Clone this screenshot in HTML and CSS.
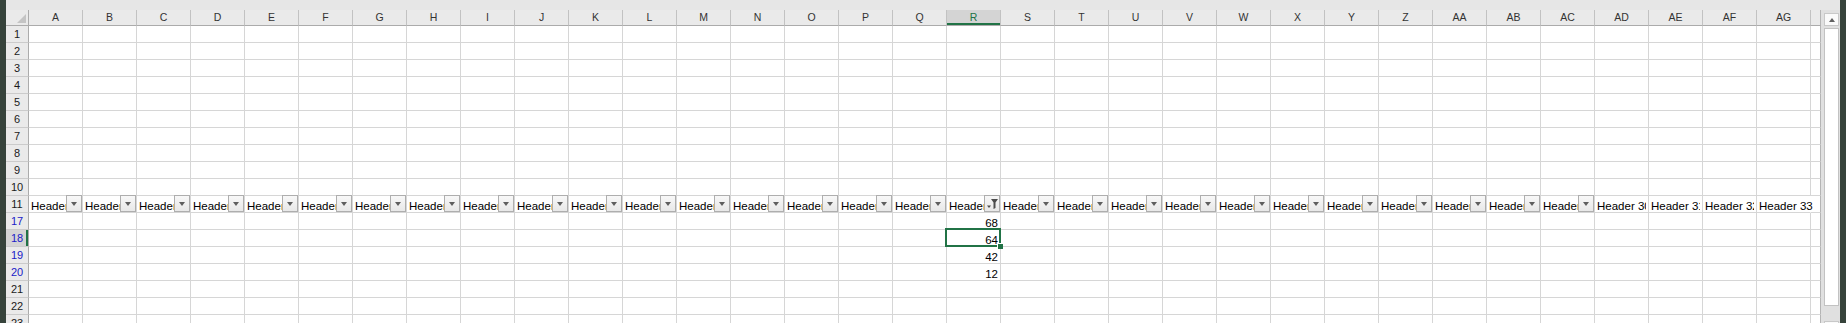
FILE: index.html
```html
<!DOCTYPE html>
<html lang="en">
<head>
<meta charset="utf-8">
<title>Sheet</title>
<link rel="stylesheet" href="styles.css">
</head>
<body>
<div class="app">
  <div class="edge"></div>
  <div class="sheet">
    <div class="row colheads"><b class="corner"></b><b>A</b><b>B</b><b>C</b><b>D</b><b>E</b><b>F</b><b>G</b><b>H</b><b>I</b><b>J</b><b>K</b><b>L</b><b>M</b><b>N</b><b>O</b><b>P</b><b>Q</b><b class="cur">R</b><b>S</b><b>T</b><b>U</b><b>V</b><b>W</b><b>X</b><b>Y</b><b>Z</b><b>AA</b><b>AB</b><b>AC</b><b>AD</b><b>AE</b><b>AF</b><b>AG</b><b class="p"></b></div>
    <div class="row"><b class="rh">1</b><i></i><i></i><i></i><i></i><i></i><i></i><i></i><i></i><i></i><i></i><i></i><i></i><i></i><i></i><i></i><i></i><i></i><i></i><i></i><i></i><i></i><i></i><i></i><i></i><i></i><i></i><i></i><i></i><i></i><i></i><i></i><i></i><i></i><i class="p"></i></div>
    <div class="row"><b class="rh">2</b><i></i><i></i><i></i><i></i><i></i><i></i><i></i><i></i><i></i><i></i><i></i><i></i><i></i><i></i><i></i><i></i><i></i><i></i><i></i><i></i><i></i><i></i><i></i><i></i><i></i><i></i><i></i><i></i><i></i><i></i><i></i><i></i><i></i><i class="p"></i></div>
    <div class="row"><b class="rh">3</b><i></i><i></i><i></i><i></i><i></i><i></i><i></i><i></i><i></i><i></i><i></i><i></i><i></i><i></i><i></i><i></i><i></i><i></i><i></i><i></i><i></i><i></i><i></i><i></i><i></i><i></i><i></i><i></i><i></i><i></i><i></i><i></i><i></i><i class="p"></i></div>
    <div class="row"><b class="rh">4</b><i></i><i></i><i></i><i></i><i></i><i></i><i></i><i></i><i></i><i></i><i></i><i></i><i></i><i></i><i></i><i></i><i></i><i></i><i></i><i></i><i></i><i></i><i></i><i></i><i></i><i></i><i></i><i></i><i></i><i></i><i></i><i></i><i></i><i class="p"></i></div>
    <div class="row"><b class="rh">5</b><i></i><i></i><i></i><i></i><i></i><i></i><i></i><i></i><i></i><i></i><i></i><i></i><i></i><i></i><i></i><i></i><i></i><i></i><i></i><i></i><i></i><i></i><i></i><i></i><i></i><i></i><i></i><i></i><i></i><i></i><i></i><i></i><i></i><i class="p"></i></div>
    <div class="row"><b class="rh">6</b><i></i><i></i><i></i><i></i><i></i><i></i><i></i><i></i><i></i><i></i><i></i><i></i><i></i><i></i><i></i><i></i><i></i><i></i><i></i><i></i><i></i><i></i><i></i><i></i><i></i><i></i><i></i><i></i><i></i><i></i><i></i><i></i><i></i><i class="p"></i></div>
    <div class="row"><b class="rh">7</b><i></i><i></i><i></i><i></i><i></i><i></i><i></i><i></i><i></i><i></i><i></i><i></i><i></i><i></i><i></i><i></i><i></i><i></i><i></i><i></i><i></i><i></i><i></i><i></i><i></i><i></i><i></i><i></i><i></i><i></i><i></i><i></i><i></i><i class="p"></i></div>
    <div class="row"><b class="rh">8</b><i></i><i></i><i></i><i></i><i></i><i></i><i></i><i></i><i></i><i></i><i></i><i></i><i></i><i></i><i></i><i></i><i></i><i></i><i></i><i></i><i></i><i></i><i></i><i></i><i></i><i></i><i></i><i></i><i></i><i></i><i></i><i></i><i></i><i class="p"></i></div>
    <div class="row"><b class="rh">9</b><i></i><i></i><i></i><i></i><i></i><i></i><i></i><i></i><i></i><i></i><i></i><i></i><i></i><i></i><i></i><i></i><i></i><i></i><i></i><i></i><i></i><i></i><i></i><i></i><i></i><i></i><i></i><i></i><i></i><i></i><i></i><i></i><i></i><i class="p"></i></div>
    <div class="row"><b class="rh">10</b><i></i><i></i><i></i><i></i><i></i><i></i><i></i><i></i><i></i><i></i><i></i><i></i><i></i><i></i><i></i><i></i><i></i><i></i><i></i><i></i><i></i><i></i><i></i><i></i><i></i><i></i><i></i><i></i><i></i><i></i><i></i><i></i><i></i><i class="p"></i></div>
    <div class="row"><b class="rh">11</b><i class="h"><span class="t">Header 1</span><span class="fb"></span></i><i class="h"><span class="t">Header 2</span><span class="fb"></span></i><i class="h"><span class="t">Header 3</span><span class="fb"></span></i><i class="h"><span class="t">Header 4</span><span class="fb"></span></i><i class="h"><span class="t">Header 5</span><span class="fb"></span></i><i class="h"><span class="t">Header 6</span><span class="fb"></span></i><i class="h"><span class="t">Header 7</span><span class="fb"></span></i><i class="h"><span class="t">Header 8</span><span class="fb"></span></i><i class="h"><span class="t">Header 9</span><span class="fb"></span></i><i class="h"><span class="t">Header 10</span><span class="fb"></span></i><i class="h"><span class="t">Header 11</span><span class="fb"></span></i><i class="h"><span class="t">Header 12</span><span class="fb"></span></i><i class="h"><span class="t">Header 13</span><span class="fb"></span></i><i class="h"><span class="t">Header 14</span><span class="fb"></span></i><i class="h"><span class="t">Header 15</span><span class="fb"></span></i><i class="h"><span class="t">Header 16</span><span class="fb"></span></i><i class="h"><span class="t">Header 17</span><span class="fb"></span></i><i class="h"><span class="t">Header 18</span><span class="fb on"><svg width="14" height="15" viewBox="0 0 14 15"><path d="M6 3h7l-2.5 3.5v5.5l-2 1v-6.5z" fill="#4d4d4d"/><path d="M2 9.5h4l-2 2.5z" fill="#4d4d4d"/></svg></span></i><i class="h"><span class="t">Header 19</span><span class="fb"></span></i><i class="h"><span class="t">Header 20</span><span class="fb"></span></i><i class="h"><span class="t">Header 21</span><span class="fb"></span></i><i class="h"><span class="t">Header 22</span><span class="fb"></span></i><i class="h"><span class="t">Header 23</span><span class="fb"></span></i><i class="h"><span class="t">Header 24</span><span class="fb"></span></i><i class="h"><span class="t">Header 25</span><span class="fb"></span></i><i class="h"><span class="t">Header 26</span><span class="fb"></span></i><i class="h"><span class="t">Header 27</span><span class="fb"></span></i><i class="h"><span class="t">Header 28</span><span class="fb"></span></i><i class="h"><span class="t">Header 29</span><span class="fb"></span></i><i class="h"><span class="t">Header 30</span></i><i class="h"><span class="t">Header 31</span></i><i class="h"><span class="t">Header 32</span></i><i class="h spill">Header 33</i><i class="p"></i></div>
    <div class="row"><b class="rh f">17</b><i></i><i></i><i></i><i></i><i></i><i></i><i></i><i></i><i></i><i></i><i></i><i></i><i></i><i></i><i></i><i></i><i></i><i class="n">68</i><i></i><i></i><i></i><i></i><i></i><i></i><i></i><i></i><i></i><i></i><i></i><i></i><i></i><i></i><i></i><i class="p"></i></div>
    <div class="row"><b class="rh f cur">18</b><i></i><i></i><i></i><i></i><i></i><i></i><i></i><i></i><i></i><i></i><i></i><i></i><i></i><i></i><i></i><i></i><i></i><i class="n sel">64</i><i></i><i></i><i></i><i></i><i></i><i></i><i></i><i></i><i></i><i></i><i></i><i></i><i></i><i></i><i></i><i class="p"></i></div>
    <div class="row"><b class="rh f">19</b><i></i><i></i><i></i><i></i><i></i><i></i><i></i><i></i><i></i><i></i><i></i><i></i><i></i><i></i><i></i><i></i><i></i><i class="n">42</i><i></i><i></i><i></i><i></i><i></i><i></i><i></i><i></i><i></i><i></i><i></i><i></i><i></i><i></i><i></i><i class="p"></i></div>
    <div class="row"><b class="rh f">20</b><i></i><i></i><i></i><i></i><i></i><i></i><i></i><i></i><i></i><i></i><i></i><i></i><i></i><i></i><i></i><i></i><i></i><i class="n">12</i><i></i><i></i><i></i><i></i><i></i><i></i><i></i><i></i><i></i><i></i><i></i><i></i><i></i><i></i><i></i><i class="p"></i></div>
    <div class="row"><b class="rh">21</b><i></i><i></i><i></i><i></i><i></i><i></i><i></i><i></i><i></i><i></i><i></i><i></i><i></i><i></i><i></i><i></i><i></i><i></i><i></i><i></i><i></i><i></i><i></i><i></i><i></i><i></i><i></i><i></i><i></i><i></i><i></i><i></i><i></i><i class="p"></i></div>
    <div class="row"><b class="rh">22</b><i></i><i></i><i></i><i></i><i></i><i></i><i></i><i></i><i></i><i></i><i></i><i></i><i></i><i></i><i></i><i></i><i></i><i></i><i></i><i></i><i></i><i></i><i></i><i></i><i></i><i></i><i></i><i></i><i></i><i></i><i></i><i></i><i></i><i class="p"></i></div>
    <div class="row"><b class="rh">23</b><i></i><i></i><i></i><i></i><i></i><i></i><i></i><i></i><i></i><i></i><i></i><i></i><i></i><i></i><i></i><i></i><i></i><i></i><i></i><i></i><i></i><i></i><i></i><i></i><i></i><i></i><i></i><i></i><i></i><i></i><i></i><i></i><i></i><i class="p"></i></div>
  </div>
  <div class="vscroll">
    <div class="sb-btn up"></div>
    <div class="sb-thumb"></div>
    <div class="sb-btn down"></div>
  </div>
  <div class="edge"></div>
</div>
</body>
</html>
```

FILE: styles.css
```css
* { box-sizing: border-box; margin: 0; padding: 0; }
html, body { width: 1846px; height: 323px; overflow: hidden; }
body { background: #e6e6e6; font-family: "Liberation Sans", Arial, sans-serif; color: #000; }

.app { display: flex; height: 323px; }
.edge { flex: none; width: 6px; background: #36433b; }

.sheet { flex: none; width: 1815px; margin-top: 10px; background: #fff; overflow: hidden; }

.row { display: flex; height: 17px; }
.row > i {
  flex: none; width: 54px; height: 17px;
  border-right: 1px solid #d6d6d6; border-bottom: 1px solid #d6d6d6;
  font-style: normal; font-size: 11.5px;
  display: flex; align-items: flex-end;
  padding: 0 2px; white-space: nowrap; position: relative;
}
.row > i.p { width: 10px; border-right-color: #b4b4b4; }

.colheads { height: 16px; }
.colheads > b {
  flex: none; width: 54px; height: 16px;
  background: #eaeaea; color: #333;
  border-right: 1px solid #c2c2c2; border-bottom: 1px solid #ababab;
  font-weight: normal; font-size: 10.5px; line-height: 15px; text-align: center;
}
.colheads > b.p { width: 10px; border-right-color: #b4b4b4; }
.colheads > b.cur { background: #d4d4d4; color: #217346; box-shadow: inset 0 -2px #217346; }
.colheads > b.corner {
  width: 23px; border-right-color: #ababab;
  display: flex; justify-content: flex-end; align-items: flex-end; padding: 0 2px 2px 0;
}
.corner::after {
  content: ""; width: 0; height: 0;
  border-left: 9px solid transparent; border-bottom: 9px solid #c4c4c4;
}

.rh {
  flex: none; width: 23px; height: 17px;
  background: #eaeaea; color: #1a1a1a;
  border-right: 1px solid #ababab; border-bottom: 1px solid #cbcbcb;
  font-weight: normal; font-size: 11px; line-height: 16px; text-align: center;
}
.rh.f { color: #2020c8; }
.rh.cur { background: #d4d4d4; box-shadow: inset -2px 0 #217346; }

.h .t { flex: 1; min-width: 0; overflow: hidden; }
.h.spill { border-right-color: transparent; overflow: visible; }

.fb {
  flex: none; align-self: stretch; width: 16px;
  margin: -1px -2px 0 0; padding-top: 1px;
  border: 1px solid #aeaeae;
  background: linear-gradient(#f8f8f8, #e8e8e8);
  display: flex; align-items: center; justify-content: center;
}
.fb::before {
  content: ""; width: 0; height: 0;
  border-left: 3.5px solid transparent; border-right: 3.5px solid transparent;
  border-top: 4px solid #5e5e5e;
}
.fb.on { padding: 0; align-items: flex-start; justify-content: flex-start; }
.fb.on::before { display: none; }
.fb.on svg { display: block; }

.n { justify-content: flex-end; }
.sel::after {
  content: ""; position: absolute;
  top: -2px; left: -2px; right: -1px; bottom: -1px;
  border: 2px solid #217346;
}
.sel::before {
  content: ""; position: absolute; z-index: 1;
  right: -3px; bottom: -3px; width: 5px; height: 5px;
  background: #217346; box-shadow: -1px -1px 0 #fff;
}

.vscroll {
  flex: none; width: 19px;
  padding: 13px 1px 0 3px;
  display: flex; flex-direction: column;
  background: linear-gradient(#e6e6e6 0 10px, #e0e0e0 10px);
}
.sb-btn {
  flex: none; height: 13px;
  border: 1px solid #c8c8c8; background: #fafafa;
  display: flex; align-items: center; justify-content: center;
}
.sb-btn.up::before {
  content: ""; width: 0; height: 0;
  border-left: 3.5px solid transparent; border-right: 3.5px solid transparent;
  border-bottom: 4px solid #606060;
}
.sb-thumb {
  flex: none; height: 278px; margin: 2px 0 15px;
  border: 1px solid #c2c2c2; background: #fff;
}
```
